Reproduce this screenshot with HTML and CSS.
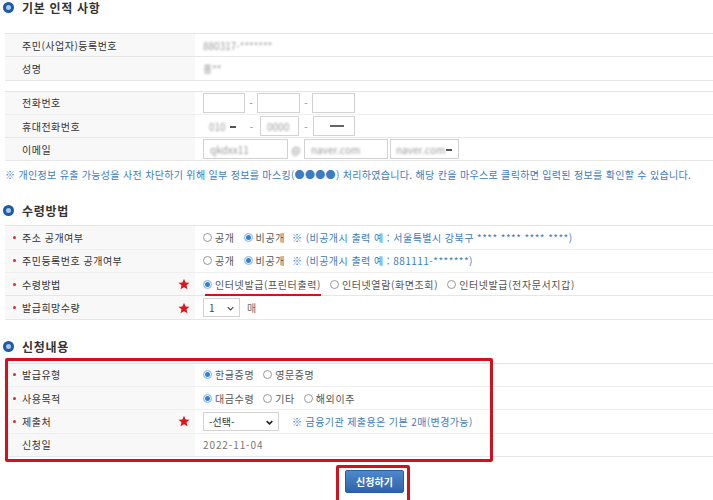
FILE: index.html
```html
<!DOCTYPE html>
<html lang="ko">
<head>
    <meta charset="UTF-8">
    <meta name="viewport" content="width=device-width, initial-scale=1.0">
    <title>발급 신청</title>
    <link rel="stylesheet" href="styles.css">
</head>
<body>
<div class="page">

    <h2 class="sec-title"><span class="sec-icon"></span>기본 인적 사항</h2>

    <div class="form-table first">
        <div class="row">
            <div class="th">주민(사업자)등록번호</div>
            <div class="td"><span class="masked">880317-*******</span></div>
        </div>
        <div class="row">
            <div class="th">성명</div>
            <div class="td"><span class="masked">홍**</span></div>
        </div>
    </div>

    <div class="form-table second">
        <div class="row">
            <div class="th">전화번호</div>
            <div class="td">
                <span class="box w42"></span><span class="sep w12">-</span><span class="box w43"></span><span class="sep w12">-</span><span class="box w43"></span>
            </div>
        </div>
        <div class="row">
            <div class="th">휴대전화번호</div>
            <div class="td">
                <span class="box sel w40 no-line"><span class="masked">010</span><span class="arrow-bar"></span></span><span class="sep w17">-</span><span class="box w39"><span class="masked">0000</span></span><span class="sep w14">-</span><span class="box w42"><span class="dash-mask"></span></span>
            </div>
        </div>
        <div class="row">
            <div class="th">이메일</div>
            <div class="td">
                <span class="box w85"><span class="masked">qkdxx11</span></span><span class="sep w16 masked">@</span><span class="box w84"><span class="masked">naver.com</span></span><span class="box sel w69 ml2"><span class="masked">naver.com</span><span class="arrow-bar"></span></span>
            </div>
        </div>
    </div>

    <p class="notice">※ 개인정보 유출 가능성을 사전 차단하기 위해 일부 정보를 마스킹(●●●●) 처리하였습니다. 해당 칸을 마우스로 클릭하면 입력된 정보를 확인할 수 있습니다.</p>

    <h2 class="sec-title mt"><span class="sec-icon"></span>수령방법</h2>

    <div class="form-table">
        <div class="row">
            <div class="th req">주소 공개여부</div>
            <div class="td">
                <span class="opt"><span class="radio"></span>공개</span>
                <span class="opt"><span class="radio on"></span>비공개</span>
                <span class="tip">※ (비공개시 출력 예 : 서울특별시 강북구 **** **** **** ****)</span>
            </div>
        </div>
        <div class="row">
            <div class="th req">주민등록번호 공개여부</div>
            <div class="td">
                <span class="opt"><span class="radio"></span>공개</span>
                <span class="opt"><span class="radio on"></span>비공개</span>
                <span class="tip">※ (비공개시 출력 예 : 881111-*******)</span>
            </div>
        </div>
        <div class="row">
            <div class="th req">수령방법
                <svg class="star" viewBox="0 0 24 24"><path d="M12 1.5l3.1 7.4 8 .6-6.1 5.2 1.9 7.8L12 18.3l-6.9 4.2 1.9-7.8L.9 9.5l8-.6z"/></svg>
            </div>
            <div class="td">
                <span class="opt marked"><span class="radio on"></span>인터넷발급(프린터출력)</span>
                <span class="opt"><span class="radio"></span>인터넷열람(화면조회)</span>
                <span class="opt"><span class="radio"></span>인터넷발급(전자문서지갑)</span>
            </div>
        </div>
        <div class="row">
            <div class="th req">발급희망수량
                <svg class="star" viewBox="0 0 24 24"><path d="M12 1.5l3.1 7.4 8 .6-6.1 5.2 1.9 7.8L12 18.3l-6.9 4.2 1.9-7.8L.9 9.5l8-.6z"/></svg>
            </div>
            <div class="td">
                <span class="box sel w37 h19"><span class="val">1</span><svg class="chev" viewBox="0 0 10 6"><path d="M1 1l4 4 4-4"/></svg></span>
                <span class="unit">매</span>
            </div>
        </div>
    </div>

    <h2 class="sec-title mt3"><span class="sec-icon"></span>신청내용</h2>

    <div class="form-table last">
        <div class="row">
            <div class="th req">발급유형</div>
            <div class="td">
                <span class="opt"><span class="radio on"></span>한글증명</span>
                <span class="opt"><span class="radio"></span>영문증명</span>
            </div>
        </div>
        <div class="row">
            <div class="th req">사용목적</div>
            <div class="td">
                <span class="opt"><span class="radio on"></span>대금수령</span>
                <span class="opt"><span class="radio"></span>기타</span>
                <span class="opt"><span class="radio"></span>해외이주</span>
            </div>
        </div>
        <div class="row">
            <div class="th req">제출처
                <svg class="star" viewBox="0 0 24 24"><path d="M12 1.5l3.1 7.4 8 .6-6.1 5.2 1.9 7.8L12 18.3l-6.9 4.2 1.9-7.8L.9 9.5l8-.6z"/></svg>
            </div>
            <div class="td">
                <span class="box sel w76 h19"><span class="val dark">-선택-</span><svg class="chev bold" viewBox="0 0 10 6"><path d="M1 1l4 4 4-4"/></svg></span>
                <span class="tip wide">※ 금융기관 제출용은 기본 2매(변경가능)</span>
            </div>
        </div>
        <div class="row">
            <div class="th">신청일</div>
            <div class="td"><span class="date">2022-11-04</span></div>
        </div>
        <span class="red-box"></span>
    </div>

    <div class="btn-area">
        <button class="btn-apply" type="button">신청하기<span class="red-frame"></span></button>
    </div>

</div>
</body>
</html>
```

FILE: styles.css
```css
html, body {
    margin: 0;
    padding: 0;
    background: #fff;
}
body {
    font-family: "Noto Sans CJK KR", "Noto Sans", sans-serif;
    font-size: 10px;
    color: #444;
    overflow: hidden;
}
.page {
    padding-left: 5px;
    height: 500px;
    position: relative;
}

/* titres de section */
.sec-title {
    margin: 0 0 0 -2px;
    height: 14px;
    display: flex;
    align-items: center;
    font-size: 12px;
    font-weight: bold;
    color: #333;
    letter-spacing: 0.7px;
}
.sec-title.mt {
    margin-top: 22px;
}
.sec-title.mt3 {
    margin-top: 20px;
}
.sec-icon {
    width: 11px;
    height: 11px;
    border-radius: 50%;
    background: #1c5ba8;
    margin-right: 8px;
    position: relative;
}
.sec-icon::after {
    content: "";
    position: absolute;
    left: 3px;
    top: 3px;
    width: 5px;
    height: 5px;
    border-radius: 50%;
    background: #a9c8ea;
}

/* tableaux */
.form-table {
    border-top: 1px solid #e4e4e4;
    margin-top: 8px;
    position: relative;
}
.form-table.first {
    margin-top: 19px;
}
.form-table.second {
    margin-top: 10px;
}
.form-table.last {
    margin-top: 9px;
}
.row {
    display: grid;
    grid-template-columns: 190px 1fr;
    height: 23.3px;
    box-sizing: border-box;
    border-bottom: 1px solid #efefef;
}
.row:last-child,
.form-table .row:nth-last-child(2) {
    border-bottom-color: #e6e6e6;
}
.th {
    background: #f8f8f8;
    padding: 0 5px 0 17px;
    display: flex;
    align-items: center;
    justify-content: space-between;
    color: #333;
    letter-spacing: 0.5px;
}
.th.req::before {
    content: "";
    width: 3px;
    height: 3px;
    border-radius: 50%;
    background: #d9283a;
    margin-left: -9px;
    margin-right: 6px;
}
.th.req {
    justify-content: flex-start;
}
.star {
    width: 12px;
    height: 12px;
    fill: #e0141e;
    margin-left: auto;
}
.td {
    padding-left: 8px;
    display: flex;
    align-items: center;
    white-space: nowrap;
}

/* masquage */
.masked {
    color: #999;
    filter: blur(0.9px);
}
.dash-mask {
    display: inline-block;
    width: 14px;
    height: 2px;
    background: #666;
    margin-left: 10px;
    filter: blur(0.4px);
}

/* champs */
.box {
    display: inline-flex;
    align-items: center;
    height: 20px;
    box-sizing: border-box;
    border: 1px solid #d2d2d2;
    background: #fff;
    padding-left: 6px;
    position: relative;
}
.box.h19 {
    height: 19px;
}
.box.sel {
    padding-left: 5px;
}
.box.no-line {
    border-color: #fff;
}
.arrow-bar {
    position: absolute;
    right: 6px;
    top: 9px;
    width: 6px;
    height: 2px;
    background: #555;
    filter: blur(0.4px);
}
.chev {
    position: absolute;
    right: 5px;
    top: 7px;
    width: 7px;
    height: 5px;
    fill: none;
    stroke: #444;
    stroke-width: 1.6;
}
.chev.bold {
    stroke: #222;
    stroke-width: 2.2;
}
.val {
    color: #444;
}
.val.dark {
    color: #333;
}
.sep {
    display: inline-block;
    text-align: center;
    color: #888;
}
.w12 { width: 12px; }
.w14 { width: 14px; }
.w16 { width: 16px; }
.w17 { width: 17px; }
.w37 { width: 37px; }
.w39 { width: 39px; }
.w40 { width: 40px; }
.w42 { width: 42px; }
.w43 { width: 43px; }
.w69 { width: 69px; }
.w76 { width: 76px; }
.w84 { width: 84px; }
.w85 { width: 85px; }
.ml2 { margin-left: 2px; }

.unit {
    margin-left: 7px;
    color: #666;
}

/* boutons radio */
.opt {
    display: inline-flex;
    align-items: center;
    margin-right: 9px;
    color: #555;
    position: relative;
    letter-spacing: 0.6px;
}
.radio {
    width: 9px;
    height: 9px;
    box-sizing: border-box;
    border: 1px solid #999;
    border-radius: 50%;
    background: #fff;
    margin-right: 3px;
}
.radio.on {
    border: 1px solid #a8c9f0;
    background: #2d7fde;
    box-shadow: inset 0 0 0 1px #fff;
}
.opt.marked::after {
    content: "";
    position: absolute;
    left: 2px;
    right: 0;
    bottom: -4px;
    height: 2px;
    background: #d8101c;
}
.tip {
    color: #3c7cbf;
    margin-left: -2px;
    letter-spacing: 0.45px;
}
.tip.wide {
    margin-left: 13px;
    letter-spacing: 0.4px;
}
.date {
    color: #777;
    letter-spacing: 0.9px;
}

/* notice */
.notice {
    margin: 7px 0 0;
    line-height: 13px;
    color: #3c7cbf;
    white-space: nowrap;
    letter-spacing: 0.32px;
}

/* annotations rouges */
.red-box {
    position: absolute;
    left: 0;
    top: -6px;
    width: 488px;
    height: 104px;
    box-sizing: border-box;
    border: 3px solid #d3101e;
    border-radius: 2px;
}
.btn-area {
    margin-top: 13px;
    padding-left: 340px;
}
.btn-apply {
    position: relative;
    width: 59px;
    height: 23px;
    border: 1px solid #2b5d9e;
    border-radius: 2px;
    background: linear-gradient(#4f88cc, #2d63aa);
    color: #fff;
    font-family: "Noto Sans CJK KR", sans-serif;
    font-size: 10px;
    font-weight: bold;
    padding: 0;
}
.red-frame {
    position: absolute;
    left: -10px;
    top: -6px;
    width: 74px;
    height: 40px;
    box-sizing: border-box;
    border: 3px solid #d3101e;
    border-radius: 2px;
}
```
